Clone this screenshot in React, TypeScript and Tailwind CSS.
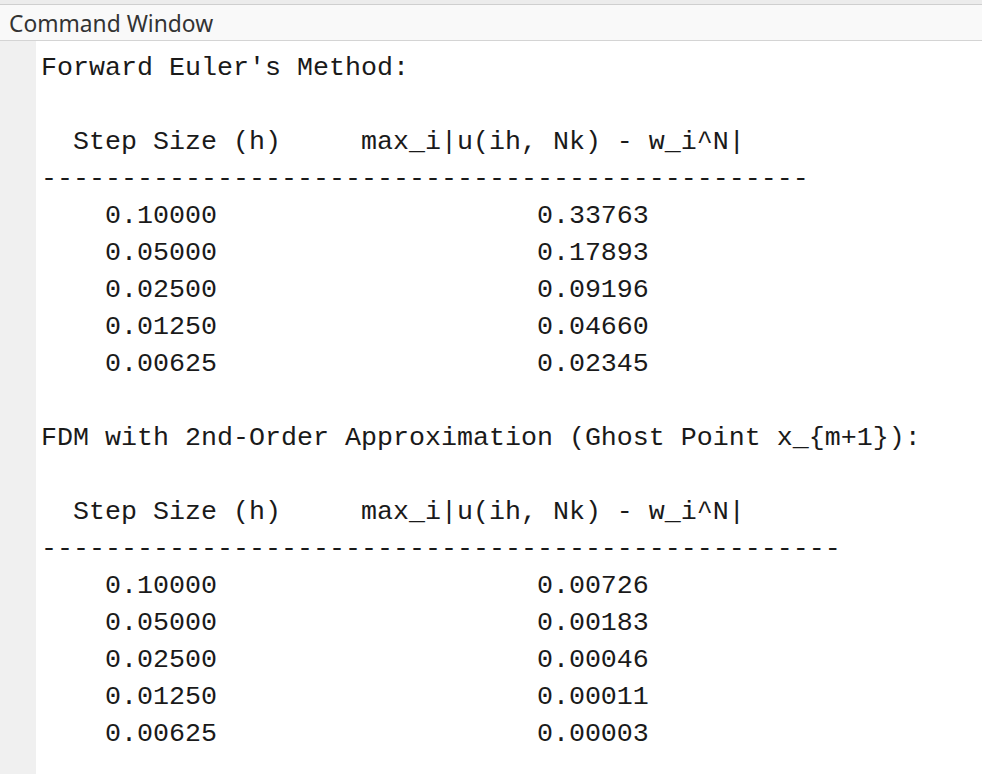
import React from "react";

const lines = [
  "Forward Euler's Method:",
  "",
  "  Step Size (h)     max_i|u(ih, Nk) - w_i^N|",
  "------------------------------------------------",
  "    0.10000                    0.33763",
  "    0.05000                    0.17893",
  "    0.02500                    0.09196",
  "    0.01250                    0.04660",
  "    0.00625                    0.02345",
  "",
  "FDM with 2nd-Order Approximation (Ghost Point x_{m+1}):",
  "",
  "  Step Size (h)     max_i|u(ih, Nk) - w_i^N|",
  "--------------------------------------------------",
  "    0.10000                    0.00726",
  "    0.05000                    0.00183",
  "    0.02500                    0.00046",
  "    0.01250                    0.00011",
  "    0.00625                    0.00003",
  "",
];

export default function App() {
  return (
    <div className="w-[982px] h-[774px] overflow-hidden bg-white flex flex-col">
      <div className="h-[5px] bg-[#ececec] border-b border-[#cfcfcf] shrink-0" />
      <div className="h-[36px] bg-[#f9f9f9] border-b border-[#d4d4d4] flex items-center pl-[9px] pt-[3px] shrink-0">
        <span
          className="text-[22.8px] text-[#333333] leading-none"
          style={{ fontFamily: '"Noto Sans", "Open Sans", sans-serif' }}
        >
          Command Window
        </span>
      </div>
      <div className="flex flex-1 min-h-0">
        <div className="w-[36px] bg-[#f0f0f0] shrink-0" />
        <div
          className="pl-[5px] pt-[9px] text-[26.67px] leading-[37px] text-[#1a1a1a] whitespace-pre"
          style={{ fontFamily: '"Liberation Mono", "Courier New", monospace' }}
        >
          {lines.map((l, i) => (
            <div key={i} className="h-[37px]">
              {l}
            </div>
          ))}
        </div>
      </div>
    </div>
  );
}
